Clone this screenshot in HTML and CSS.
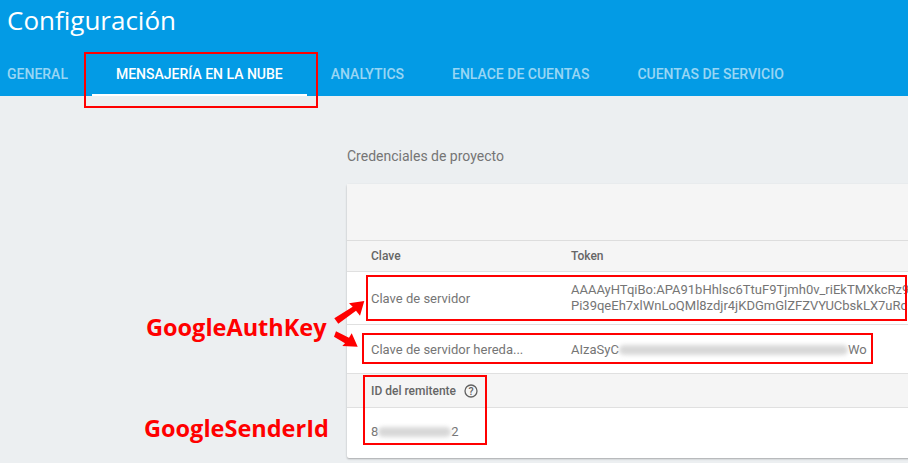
FILE: index.html
```html
<!DOCTYPE html>
<html lang="es">
<head>
    <meta charset="UTF-8">
    <meta name="viewport" content="width=device-width, initial-scale=1.0">
    <title>Configuración</title>
    <link rel="stylesheet" href="styles.css">
</head>
<body>
    <header class="topbar">
        <h1 class="title">Configuración</h1>
        <nav class="tabs">
            <a class="tab tab-first">GENERAL</a>
            <a class="tab tab-active">MENSAJERÍA EN LA NUBE</a>
            <a class="tab">ANALYTICS</a>
            <a class="tab">ENLACE DE CUENTAS</a>
            <a class="tab">CUENTAS DE SERVICIO</a>
        </nav>
    </header>
    <main class="content">
        <h2 class="section-title">Credenciales de proyecto</h2>
        <div class="card">
            <div class="card-top"></div>
            <div class="row row-head">
                <div class="col-key">Clave</div>
                <div class="col-token">Token</div>
            </div>
            <div class="row row-server">
                <div class="col-key">Clave de servidor</div>
                <div class="col-token token-lines">
                    <div>AAAAyHTqiBo:APA91bHhlsc6TtuF9Tjmh0v_riEkTMXkcRz9</div>
                    <div>Pi39qeEh7xlWnLoQMl8zdjr4jKDGmGlZFZVYUCbskLX7uRc</div>
                </div>
            </div>
            <div class="row row-legacy">
                <div class="col-key">Clave de servidor hereda...</div>
                <div class="col-token">AIzaSyC<span class="smudge smudge-long"></span>Wo</div>
            </div>
            <div class="row row-head row-sender-head">
                <div class="col-key">ID del remitente</div>
                <svg class="help" viewBox="0 0 14 14" width="14" height="14">
                    <circle cx="7" cy="7" r="6" fill="none" stroke="#616161" stroke-width="1.3"/>
                    <text x="7" y="10.6" text-anchor="middle" class="help-mark">?</text>
                </svg>
            </div>
            <div class="row row-sender">
                <div class="col-key">8<span class="smudge smudge-short"></span>2</div>
            </div>
        </div>
    </main>

    <!-- red marks drawn over the screenshot -->
    <div class="mark mark-tab"></div>
    <div class="mark mark-server"></div>
    <div class="mark mark-legacy"></div>
    <div class="mark mark-sender"></div>
    <div class="note note-auth">GoogleAuthKey</div>
    <div class="note note-sender">GoogleSenderId</div>
    <svg class="arrows" viewBox="0 0 40 60" width="40" height="60">
        <path d="M2.3 22.3 L20.7 10.7 L17 7.3 L32.3 5 L28 19.7 L24 14.7 L6.3 27.7 Z" fill="#f00"/>
        <path d="M4 35.3 L17 41.7 L19.7 37.3 L25.7 50.7 L10.3 50 L13 47.3 L2 40.7 Z" fill="#f00"/>
    </svg>
</body>
</html>
```

FILE: styles.css
```css
body {
    margin: 0;
    width: 908px;
    height: 463px;
    overflow: hidden;
    position: relative;
    background: #eceff1;
    font-family: Roboto, sans-serif;
    color: #757575;
}
.topbar {
    height: 96px;
    background: #039be5;
    display: flex;
    flex-direction: column;
    justify-content: space-between;
}
.title {
    margin: 0;
    padding: 3px 0 0 7px;
    font-family: "Open Sans", sans-serif;
    font-size: 26px;
    line-height: 34px;
    font-weight: 500;
    color: #fff;
}
.tabs {
    display: flex;
    height: 44px;
}
.tab {
    padding: 0 24px;
    line-height: 44px;
    font-size: 14px;
    font-weight: 500;
    white-space: nowrap;
    color: rgba(255, 255, 255, 0.6);
}
.tab-first {
    padding-left: 7px;
}
.tab-active {
    color: #fff;
    border-bottom: 2px solid #fff;
    height: 42px;
}
.content {
    padding: 52px 0 0 347px;
}
.section-title {
    margin: 0;
    font-size: 14px;
    line-height: 16px;
    font-weight: 400;
    color: #757575;
}
.card {
    margin-top: 20px;
    width: 600px;
    background: #fff;
    border-radius: 2px;
    box-shadow: 0 1px 2px rgba(0, 0, 0, 0.3);
}
.card-top {
    height: 56px;
    background: #f5f5f5;
    border-bottom: 1px solid #ddd;
}
.row {
    display: flex;
    align-items: center;
    padding-left: 24px;
    font-size: 13px;
    white-space: nowrap;
    border-bottom: 1px solid #e0e0e0;
}
.row-head {
    height: 30px;
    background: #f5f5f5;
    font-size: 12px;
    font-weight: 500;
    color: #666;
}
.row-server {
    height: 52px;
}
.row-legacy {
    height: 48px;
}
.row-sender-head {
    height: 33px;
}
.row-sender {
    height: 50px;
    border-bottom: none;
}
.col-key {
    width: 200px;
    flex: none;
}
.row-sender-head .col-key {
    width: auto;
}
.row-sender .col-key {
    padding-bottom: 4px;
}
.token-lines {
    line-height: 16px;
}
.smudge {
    display: inline-block;
    vertical-align: middle;
    height: 10px;
    background: #d8d8d8;
    border-radius: 5px;
    filter: blur(2px);
}
.smudge-long {
    width: 229px;
}
.smudge-short {
    width: 73px;
}
.help {
    margin-left: 8px;
}
.help-mark {
    font-size: 10.5px;
    font-weight: 500;
    fill: #616161;
}
.mark {
    position: absolute;
    box-sizing: border-box;
    border: 2px solid #f00;
}
.mark-tab {
    left: 84px;
    top: 52px;
    width: 234px;
    height: 56px;
}
.mark-server {
    left: 366px;
    top: 275px;
    width: 541px;
    height: 46px;
}
.mark-legacy {
    left: 362px;
    top: 333px;
    width: 511px;
    height: 31px;
}
.mark-sender {
    left: 363px;
    top: 375px;
    width: 124px;
    height: 70px;
}
.note {
    position: absolute;
    font-family: "Open Sans", sans-serif;
    font-size: 23.5px;
    line-height: 30px;
    font-weight: 700;
    color: #f00;
    white-space: nowrap;
}
.note-auth {
    left: 146px;
    top: 312px;
}
.note-sender {
    left: 144px;
    top: 413px;
}
.arrows {
    position: absolute;
    left: 332px;
    top: 296px;
}
```
